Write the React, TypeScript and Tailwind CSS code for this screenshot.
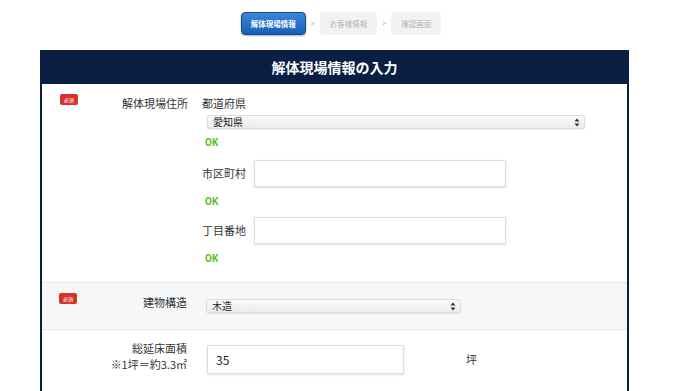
import React from "react";

const jp = { fontFamily: '"Noto Sans CJK JP", "Noto Sans", sans-serif' };

const Badge = () => (
  <span className="inline-flex h-[11px] w-[18px] items-center justify-center rounded-[2px] bg-[#d9302c] text-[5px] leading-none text-white">
    必須
  </span>
);

const Arrows = () => (
  <svg width="6" height="9" viewBox="0 0 6 9" className="text-[#333]">
    <path d="M3 0.5 L5.5 3.5 H0.5 Z" fill="currentColor" />
    <path d="M3 8.5 L5.5 5.5 H0.5 Z" fill="currentColor" />
  </svg>
);

const Select = ({ value, className }: { value: string; className: string }) => (
  <div
    className={`flex h-[14px] items-center justify-between rounded-[3px] border border-[#dcdcdc] bg-gradient-to-b from-[#fafafa] to-[#ececec] pl-[5px] pr-[4px] text-[10px] leading-none text-[#222] shadow-[0_1px_1px_rgba(0,0,0,0.08)] ${className}`}
  >
    <span>{value}</span>
    <Arrows />
  </div>
);

const TextInput = ({ value, className }: { value?: string; className: string }) => (
  <div
    className={`flex items-center border border-[#dedede] bg-white px-[8px] text-[12px] text-[#222] shadow-[0_1px_2px_rgba(0,0,0,0.12)] ${className}`}
  >
    {value}
  </div>
);

const Ok = () => <div className="text-[10px] font-bold leading-none text-[#5cbd2c]" style={{ fontFamily: "Roboto, sans-serif" }}>OK</div>;

const Step = ({ label, active }: { label: string; active?: boolean }) => (
  <div
    className={
      active
        ? "flex h-[23px] items-center rounded-[4px] border border-[#0d4a99] bg-gradient-to-b from-[#3f86d8] to-[#135fb8] px-[9px] text-[7.5px] font-bold text-white shadow-[0_1px_2px_rgba(0,0,0,0.3)]"
        : "flex h-[23px] items-center rounded-[4px] bg-[#f2f2f2] px-[10px] text-[7.5px] text-[#b5b5b5]"
    }
  >
    {label}
  </div>
);

export default function App() {
  return (
    <div className="h-[391px] w-[680px] overflow-hidden bg-white" style={jp}>
      <div className="flex h-[50px] items-start justify-center gap-[5px] pl-[2px] pt-[12px]">
        <Step label="解体現場情報" active />
        <span className="pt-[6px] text-[7px] text-[#aaa]">&gt;</span>
        <Step label="お客様情報" />
        <span className="pt-[6px] text-[7px] text-[#aaa]">&gt;</span>
        <Step label="確認画面" />
      </div>

      <div className="ml-[40px] w-[589px] border-x-2 border-[#0b1f45]">
        <div className="flex h-[34px] items-center justify-center bg-[#0b1f45] text-[14px] font-bold text-white">
          解体現場情報の入力
        </div>

        <div className="flex h-[199px] border-b border-[#e6e8ec] bg-white">
          <div className="flex w-[160px] justify-between pl-[18px] pr-[14px] pt-[10px]">
            <Badge />
            <span className="pt-[2px] text-[11px] leading-[14px] text-[#333]">解体現場住所</span>
          </div>
          <div className="flex flex-1 flex-col pt-[12px]">
            <div className="text-[11px] leading-[14px] text-[#333]">都道府県</div>
            <Select value="愛知県" className="ml-[5px] mt-[5px] w-[378px]" />
            <div className="ml-[3px] mt-[9px]"><Ok /></div>
            <div className="mt-[12px] flex items-center gap-[8px]">
              <span className="text-[11px] text-[#333]">市区町村</span>
              <TextInput className="h-[27px] w-[252px]" />
            </div>
            <div className="ml-[3px] mt-[10px]"><Ok /></div>
            <div className="mt-[10px] flex items-center gap-[8px]">
              <span className="text-[11px] text-[#333]">丁目番地</span>
              <TextInput className="h-[27px] w-[252px]" />
            </div>
            <div className="ml-[3px] mt-[10px]"><Ok /></div>
          </div>
        </div>

        <div className="flex h-[47px] border-b border-[#e6e8ec] bg-[#f6f7f9]">
          <div className="flex w-[160px] justify-between pl-[17px] pr-[15px] pt-[10px]">
            <Badge />
            <span className="pt-[2px] text-[11px] leading-[14px] text-[#333]">建物構造</span>
          </div>
          <div className="flex flex-1 items-start pt-[16px]">
            <Select value="木造" className="ml-[4px] w-[255px]" />
          </div>
        </div>

        <div className="flex h-[70px] bg-white">
          <div className="flex w-[160px] flex-col items-end pr-[15px] pt-[10px] text-[11px] leading-[16px] text-[#333]">
            <span>総延床面積</span>
            <span>※1坪＝約3.3㎡</span>
          </div>
          <div className="flex flex-1 items-start gap-[62px] pt-[15px]">
            <TextInput value="35" className="ml-[5px] h-[29px] w-[197px]" />
            <span className="pt-[6px] text-[11px] text-[#333]">坪</span>
          </div>
        </div>
      </div>
    </div>
  );
}
